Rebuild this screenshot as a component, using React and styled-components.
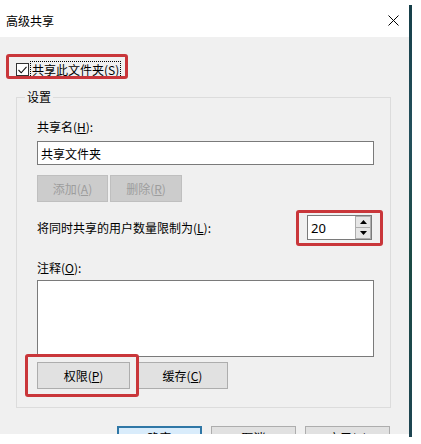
import React from 'react';
import styled, { createGlobalStyle } from 'styled-components';

const GlobalStyle = createGlobalStyle`
    html, body {
        margin: 0;
        padding: 0;
        background: #ffffff;
    }
    body {
        font-family: 'Noto Sans CJK SC', 'Noto Sans', sans-serif;
        font-size: 12px;
        color: #000000;
    }
`;

const Page = styled.div`
    display: flex;
    align-items: flex-start;
    width: 421px;
    height: 444px;
    overflow: hidden;
`;

const Dialog = styled.div`
    display: flex;
    flex-direction: column;
    width: 409px;
    height: 434px;
    overflow: hidden;
    background: #f0f0f0;
`;

const EdgeStrip = styled.div`
    width: 3px;
    height: 432px;
    margin-top: 5px;
    background: linear-gradient(180deg, #163f49 0%, #24505c 30%, #1b4a44 60%, #1e4552 100%);
`;

const TitleBar = styled.div`
    display: flex;
    align-items: center;
    justify-content: space-between;
    height: 37px;
    padding: 0 10px 0 6px;
    background: #ffffff;
    flex-shrink: 0;
`;

const Title = styled.div`
    font-size: 12px;
    line-height: 16px;
    padding-top: 4px;
`;

const CloseButton = styled.div`
    display: flex;
    align-items: center;
    justify-content: center;
    width: 12px;
    height: 12px;
    padding-top: 4px;
`;

const Body = styled.div`
    display: flex;
    flex-direction: column;
    padding: 24px 18px 0 16px;
`;

const Highlight = styled.div`
    position: relative;
    display: ${p => (p.$block ? 'flex' : 'inline-flex')};
    align-self: flex-start;

    &::after {
        content: '';
        position: absolute;
        top: ${p => p.$top}px;
        right: ${p => p.$right}px;
        bottom: ${p => p.$bottom}px;
        left: ${p => p.$left}px;
        border: 3px solid #c9363a;
        border-radius: 3px;
        pointer-events: none;
    }
`;

const CheckRow = styled.label`
    display: inline-flex;
    align-items: center;
    height: 17px;
`;

const CheckBox = styled.span`
    display: flex;
    align-items: center;
    justify-content: center;
    width: 11px;
    height: 11px;
    border: 1px solid #333333;
    background: #ffffff;
`;

const FocusText = styled.span`
    margin-left: 2px;
    padding: 0 1px;
    line-height: 15px;
    outline: 1px dotted #000000;
`;

const AccessKey = styled.span`
    text-decoration: underline;
`;

const Group = styled.fieldset`
    margin: 11px 0 0 0;
    padding: 0;
    min-width: 0;
    border: 1px solid #dcdcdc;
`;

const GroupLegend = styled.legend`
    margin-left: 8px;
    padding: 0 2px;
    line-height: 16px;
`;

const GroupInner = styled.div`
    display: flex;
    flex-direction: column;
    padding: 0 16px 18px 20px;
`;

const FieldLabel = styled.div`
    line-height: 16px;
    margin-top: ${p => p.$top || 0}px;
`;

const TextBox = styled.div`
    display: flex;
    align-items: center;
    height: 22px;
    margin-top: 6px;
    padding: 0 3px;
    border: 1px solid #7a7a7a;
    background: #ffffff;
`;

const TextArea = styled.div`
    height: 75px;
    margin-top: 4px;
    border: 1px solid #7a7a7a;
    background: #ffffff;
`;

const ButtonRow = styled.div`
    display: flex;
    gap: ${p => p.$gap}px;
    margin-top: ${p => p.$top}px;
`;

const Button = styled.div`
    display: flex;
    align-items: center;
    justify-content: center;
    box-sizing: border-box;
    width: ${p => p.$width}px;
    height: ${p => p.$height || 27}px;
    border: 1px solid ${p => (p.$disabled ? '#bfbfbf' : '#adadad')};
    background: ${p => (p.$disabled ? '#cccccc' : '#e1e1e1')};
    color: ${p => (p.$disabled ? '#9d9d9d' : '#000000')};
`;

const DefaultButton = styled(Button)`
    border: 2px solid #2f77a6;
    background: #d9ecfb;
`;

const LimitRow = styled.div`
    display: flex;
    align-items: center;
    justify-content: space-between;
    margin-top: 13px;
    padding-right: 2px;
`;

const SpinBox = styled.div`
    display: flex;
    align-items: stretch;
    box-sizing: border-box;
    width: 65px;
    height: 25px;
    border: 1px solid #7a7a7a;
    background: #ffffff;
`;

const SpinValue = styled.div`
    flex: 1;
    display: flex;
    align-items: center;
    padding-left: 3px;
    font-family: 'Noto Sans', sans-serif;
    font-size: 13px;
`;

const SpinButtons = styled.div`
    display: flex;
    flex-direction: column;
    width: 16px;
`;

const SpinArrow = styled.div`
    flex: 1;
    display: flex;
    align-items: center;
    justify-content: center;
    border: 1px solid #adadad;
    background: #e6e6e6;
    & + & {
        border-top: none;
    }
`;

const DialogFooter = styled.div`
    display: flex;
    justify-content: flex-end;
    gap: 9px;
    margin-top: 18px;
    padding-right: 1px;
`;

function Arrow({ up }) {
    return (
        <svg width="7" height="4" viewBox="0 0 7 4">
            <polygon points={up ? '0,4 7,4 3.5,0' : '0,0 7,0 3.5,4'} fill="#000" />
        </svg>
    );
}

export default function App() {
    return (
        <Page>
            <GlobalStyle />
            <Dialog>
                <TitleBar>
                    <Title>高级共享</Title>
                    <CloseButton>
                        <svg width="11" height="11" viewBox="0 0 11 11">
                            <path d="M0.5 0.5 L10.5 10.5 M10.5 0.5 L0.5 10.5" stroke="#000" strokeWidth="1" />
                        </svg>
                    </CloseButton>
                </TitleBar>
                <Body>
                    <Highlight $top={-7} $right={-8} $bottom={-1} $left={-10}>
                        <CheckRow>
                            <CheckBox>
                                <svg width="9" height="8" viewBox="0 0 9 8">
                                    <polyline points="0.5,4 3.2,6.8 8.5,0.8" fill="none" stroke="#111" strokeWidth="1.1" />
                                </svg>
                            </CheckBox>
                            <FocusText>共享此文件夹(<AccessKey>S</AccessKey>)</FocusText>
                        </CheckRow>
                    </Highlight>
                    <Group>
                        <GroupLegend>设置</GroupLegend>
                        <GroupInner>
                            <FieldLabel $top={14}>共享名(<AccessKey>H</AccessKey>):</FieldLabel>
                            <TextBox>共享文件夹</TextBox>
                            <ButtonRow $gap={2} $top={10}>
                                <Button $width={71} $disabled>添加(<AccessKey>A</AccessKey>)</Button>
                                <Button $width={72} $disabled>删除(<AccessKey>R</AccessKey>)</Button>
                            </ButtonRow>
                            <LimitRow>
                                <FieldLabel>将同时共享的用户数量限制为(<AccessKey>L</AccessKey>):</FieldLabel>
                                <Highlight $top={-5} $right={-11} $bottom={-6} $left={-11}>
                                    <SpinBox>
                                        <SpinValue>20</SpinValue>
                                        <SpinButtons>
                                            <SpinArrow><Arrow up /></SpinArrow>
                                            <SpinArrow><Arrow /></SpinArrow>
                                        </SpinButtons>
                                    </SpinBox>
                                </Highlight>
                            </LimitRow>
                            <FieldLabel $top={20}>注释(<AccessKey>O</AccessKey>):</FieldLabel>
                            <TextArea />
                            <ButtonRow $gap={7} $top={5}>
                                <Highlight $top={-8} $right={-9} $bottom={-8} $left={-12}>
                                    <Button $width={93}>权限(<AccessKey>P</AccessKey>)</Button>
                                </Highlight>
                                <Button $width={91}>缓存(<AccessKey>C</AccessKey>)</Button>
                            </ButtonRow>
                        </GroupInner>
                    </Group>
                    <DialogFooter>
                        <DefaultButton $width={85} $height={23}>确定</DefaultButton>
                        <Button $width={85} $height={23}>取消</Button>
                        <Button $width={85} $height={23}>应用(<AccessKey>A</AccessKey>)</Button>
                    </DialogFooter>
                </Body>
            </Dialog>
            <EdgeStrip />
        </Page>
    );
}
